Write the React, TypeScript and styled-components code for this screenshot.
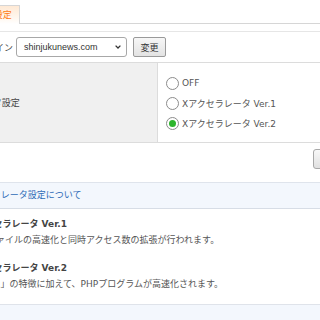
import React from "react";
import styled, { createGlobalStyle } from "styled-components";

const Global = createGlobalStyle`
  html, body { margin: 0; padding: 0; background: #fff; overflow: hidden; }
`;

const Page = styled.div`
  margin-left: -100px;
  width: 520px;
  font-family: "DejaVu Sans", "Noto Sans CJK JP", sans-serif;
  font-size: 9px;
  color: #555;
`;

const Tabs = styled.div`
  display: flex;
  padding: 5px 0 0 14px;
  border-bottom: 1px solid #d6d6d6;
`;

const Tab = styled.div`
  height: 18px;
  line-height: 18px;
  padding: 0 7px 0 10px;
  margin-bottom: -1px;
  border: 1px solid #d6d6d6;
  border-bottom: none;
  background: linear-gradient(#ffe9d4, #fff8f1 70%, #fff);
  color: #ff7a10;
`;

const FormRow = styled.div`
  display: flex;
  align-items: center;
  height: 30px;
  margin-top: 7px;
  padding-left: 77px;
  border-top: 1px solid #e6e6e6;
  border-bottom: 1px solid #dcdcdc;
`;

const FieldLabel = styled.span`
  margin-right: 3px;
  color: #444;
`;

const SelectWrap = styled.div`
  position: relative;
  width: 111px;
  height: 20px;
`;

const Select = styled.select`
  appearance: none;
  box-sizing: border-box;
  width: 100%;
  height: 100%;
  margin: 0;
  padding: 0 0 0 7px;
  border: 1px solid #a8a8a8;
  border-radius: 3px;
  background: #fff;
  font-family: "Liberation Sans", Arial, sans-serif;
  font-size: 9px;
  color: #333;
`;

const Chevron = styled.svg`
  position: absolute;
  right: 6px;
  top: 8px;
  pointer-events: none;
`;

const SmallButton = styled.button`
  box-sizing: border-box;
  width: 33px;
  height: 20px;
  margin: 0 0 0 6px;
  padding: 0;
  border: 1px solid #9a9a9a;
  border-radius: 2px;
  background: linear-gradient(#f7f7f7, #e3e3e3);
  font-family: "DejaVu Sans", "Noto Sans CJK JP", sans-serif;
  font-size: 9px;
  color: #333;
`;

const SettingRow = styled.div`
  display: grid;
  grid-template-columns: 258px 1fr;
  border-bottom: 1px solid #dcdcdc;
`;

const HeadCell = styled.div`
  display: flex;
  align-items: center;
  padding-left: 33px;
  background: #f0f0f0;
  border-right: 1px solid #dcdcdc;
  color: #444;
`;

const BodyCell = styled.div`
  display: flex;
  flex-direction: column;
  padding: 10px 0 9px 8px;
`;

const RadioLine = styled.label`
  display: flex;
  align-items: center;
  height: 20px;
  color: #555;
`;

const Radio = styled.input.attrs({ type: "radio" })`
  appearance: none;
  box-sizing: border-box;
  width: 13px;
  height: 13px;
  margin: 0 3px 0 0;
  border: 1px solid #8c8c8c;
  border-radius: 50%;
  background: #fff;
  display: grid;
  place-items: center;
  &:checked::after {
    content: "";
    width: 7px;
    height: 7px;
    border-radius: 50%;
    background: #2db52d;
  }
`;

const ActionRow = styled.div`
  display: flex;
  margin-top: 6px;
  padding-left: 413px;
`;

const MainButton = styled.button`
  box-sizing: border-box;
  width: 60px;
  height: 20px;
  margin: 0;
  border: 1px solid #a8a8a8;
  border-radius: 3px;
  background: linear-gradient(#f8f8f8, #e0e0e0);
  font-family: "DejaVu Sans", "Noto Sans CJK JP", sans-serif;
  font-size: 9px;
  color: #333;
`;

const SectionHead = styled.div`
  margin-top: 13px;
  height: 25px;
  line-height: 25px;
  padding-left: 59px;
  background: #f3f7fd;
  border-top: 1px solid #dfe4ec;
  border-bottom: 1px solid #d7dde6;
  color: #2f6bb7;
`;

const SectionBody = styled.div`
  padding: 6px 0 13px 69px;
  border-bottom: 1px solid #dfe3ea;
`;

const ItemTitle = styled.div<{ $gap?: boolean }>`
  line-height: 18px;
  font-weight: bold;
  color: #444;
  margin-top: ${(p) => (p.$gap ? "12px" : "0")};
`;

const ItemText = styled.div`
  line-height: 14px;
  color: #555;
`;

const NextHead = styled.div`
  height: 20px;
  background: #f3f7fd;
`;

export default function App() {
  return (
    <Page>
      <Global />
      <Tabs>
        <Tab>Xアクセラレータ設定</Tab>
      </Tabs>
      <FormRow>
        <FieldLabel>ドメイン</FieldLabel>
        <SelectWrap>
          <Select defaultValue="shinjukunews.com">
            <option>shinjukunews.com</option>
          </Select>
          <Chevron width="6" height="4" viewBox="0 0 6 4">
            <path d="M0.6 0.6 L3 3 L5.4 0.6" fill="none" stroke="#333" strokeWidth="1.3" />
          </Chevron>
        </SelectWrap>
        <SmallButton>変更</SmallButton>
      </FormRow>
      <SettingRow>
        <HeadCell>Xアクセラレータ設定</HeadCell>
        <BodyCell>
          <RadioLine>
            <Radio name="xa" />
            OFF
          </RadioLine>
          <RadioLine>
            <Radio name="xa" />
            Xアクセラレータ Ver.1
          </RadioLine>
          <RadioLine>
            <Radio name="xa" defaultChecked />
            Xアクセラレータ Ver.2
          </RadioLine>
        </BodyCell>
      </SettingRow>
      <ActionRow>
        <MainButton>設定する</MainButton>
      </ActionRow>
      <SectionHead>Xアクセラレータ設定について</SectionHead>
      <SectionBody>
        <ItemTitle>Xアクセラレータ Ver.1</ItemTitle>
        <ItemText>静的ファイルの高速化と同時アクセス数の拡張が行われます。</ItemText>
        <ItemTitle $gap>Xアクセラレータ Ver.2</ItemTitle>
        <ItemText>「Ver.1」の特徴に加えて、PHPプログラムが高速化されます。</ItemText>
      </SectionBody>
      <NextHead />
    </Page>
  );
}
